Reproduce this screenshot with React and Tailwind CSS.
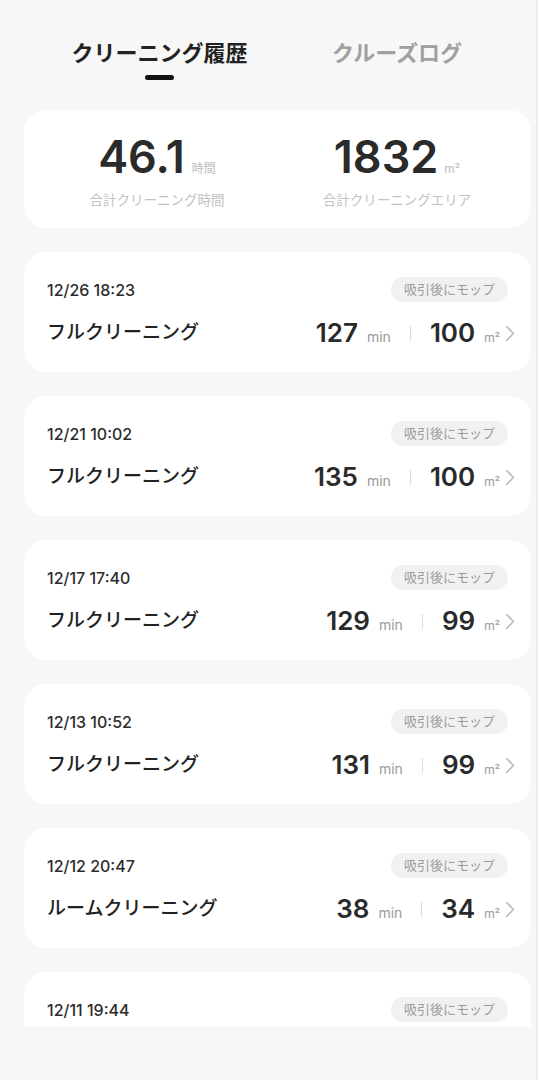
import React from 'react';

const records = [
  { date: '12/26 18:23', mode: 'フルクリーニング', minutes: 127, area: 100 },
  { date: '12/21 10:02', mode: 'フルクリーニング', minutes: 135, area: 100 },
  { date: '12/17 17:40', mode: 'フルクリーニング', minutes: 129, area: 99 },
  { date: '12/13 10:52', mode: 'フルクリーニング', minutes: 131, area: 99 },
  { date: '12/12 20:47', mode: 'ルームクリーニング', minutes: 38, area: 34 },
  // only the top of this one is on screen
  { date: '12/11 19:44', partial: true },
];

const Chevron = () => (
  <svg width="10" height="17" viewBox="0 0 10 17" className="ml-[5px] self-center">
    <polyline points="1.5,1.5 8.5,8.5 1.5,15.5" fill="none" stroke="#bdbdbd" strokeWidth="1.6" strokeLinecap="round" strokeLinejoin="round" />
  </svg>
);

const RecordCard = ({ record }) => (
  <div
    className={
      record.partial
        ? 'bg-white rounded-t-[22px] h-[55px] shrink-0 pl-[23px] pr-[16px] pt-[25px]'
        : 'bg-white rounded-[22px] h-[120px] shrink-0 pl-[23px] pr-[16px] pt-[25px]'
    }
  >
    <div className="flex items-center justify-between h-[25px] pr-[7px]">
      <span className="text-[16px] font-medium text-[#2c2c2c]">{record.date}</span>
      <span className="h-[25px] rounded-full bg-[#f1f1f1] px-[13px] flex items-center text-[13px] text-[#9c9c9c]">
        吸引後にモップ
      </span>
    </div>
    {!record.partial && (
      <div className="flex items-center justify-between h-[30px] mt-[16px]">
        <span className="text-[19px] font-medium text-[#222]">{record.mode}</span>
        <div className="flex items-center">
          <div className="flex items-baseline">
            <span className="text-[26px] font-semibold text-[#2a2a2a] leading-none">{record.minutes}</span>
            <span className="ml-[9px] text-[14px] text-[#9a9a9a] leading-none">min</span>
          </div>
          <div className="mx-[19px] w-px h-[15px] bg-[#dcdcdc]" />
          <div className="flex items-baseline">
            <span className="text-[26px] font-semibold text-[#2a2a2a] leading-none">{record.area}</span>
            <span className="ml-[9px] text-[12px] text-[#9a9a9a] leading-none">m²</span>
          </div>
          <Chevron />
        </div>
      </div>
    )}
  </div>
);

const App = () => {
  return (
    <div
      className="min-h-screen bg-[#f7f7f7] border-r-2 border-[#ececec]"
      style={{ fontFamily: 'Inter, "Noto Sans CJK JP", sans-serif' }}
    >
      {/* Tabs */}
      <div className="flex pl-[37px] pt-[42px]">
        <div className="w-[245px] flex flex-col items-center">
          <span className="text-[22px] leading-[22px] font-bold text-[#222]">クリーニング履歴</span>
          <div className="mt-[11px] w-[29px] h-[5px] rounded-full bg-[#111]" />
        </div>
        <div className="w-[230px] flex flex-col items-center">
          <span className="text-[22px] leading-[22px] font-bold text-[#a0a0a0]">クルーズログ</span>
        </div>
      </div>

      {/* Totals */}
      <div className="ml-[24px] mr-[5px] mt-[30px] h-[118px] bg-white rounded-[22px] flex pl-[13px] pt-[24px]">
        <div className="w-[240px] flex flex-col items-center">
          <div className="flex items-baseline">
            <span className="text-[45px] leading-none font-semibold text-[#2a2a2a]">46.1</span>
            <span className="ml-[7px] text-[12px] text-[#bdbdbd]">時間</span>
          </div>
          <span className="mt-[11px] text-[13.5px] text-[#c2c2c2]">合計クリーニング時間</span>
        </div>
        <div className="w-[240px] flex flex-col items-center">
          <div className="flex items-baseline">
            <span className="text-[45px] leading-none font-semibold text-[#2a2a2a]">1832</span>
            <span className="ml-[6px] text-[12px] text-[#bdbdbd]">m²</span>
          </div>
          <span className="mt-[11px] text-[13.5px] text-[#c2c2c2]">合計クリーニングエリア</span>
        </div>
      </div>

      {/* History list */}
      <div className="ml-[24px] mr-[5px] mt-[24px] flex flex-col gap-[24px]">
        {records.map((r) => (
          <RecordCard key={r.date} record={r} />
        ))}
      </div>
    </div>
  );
};

export default App;
